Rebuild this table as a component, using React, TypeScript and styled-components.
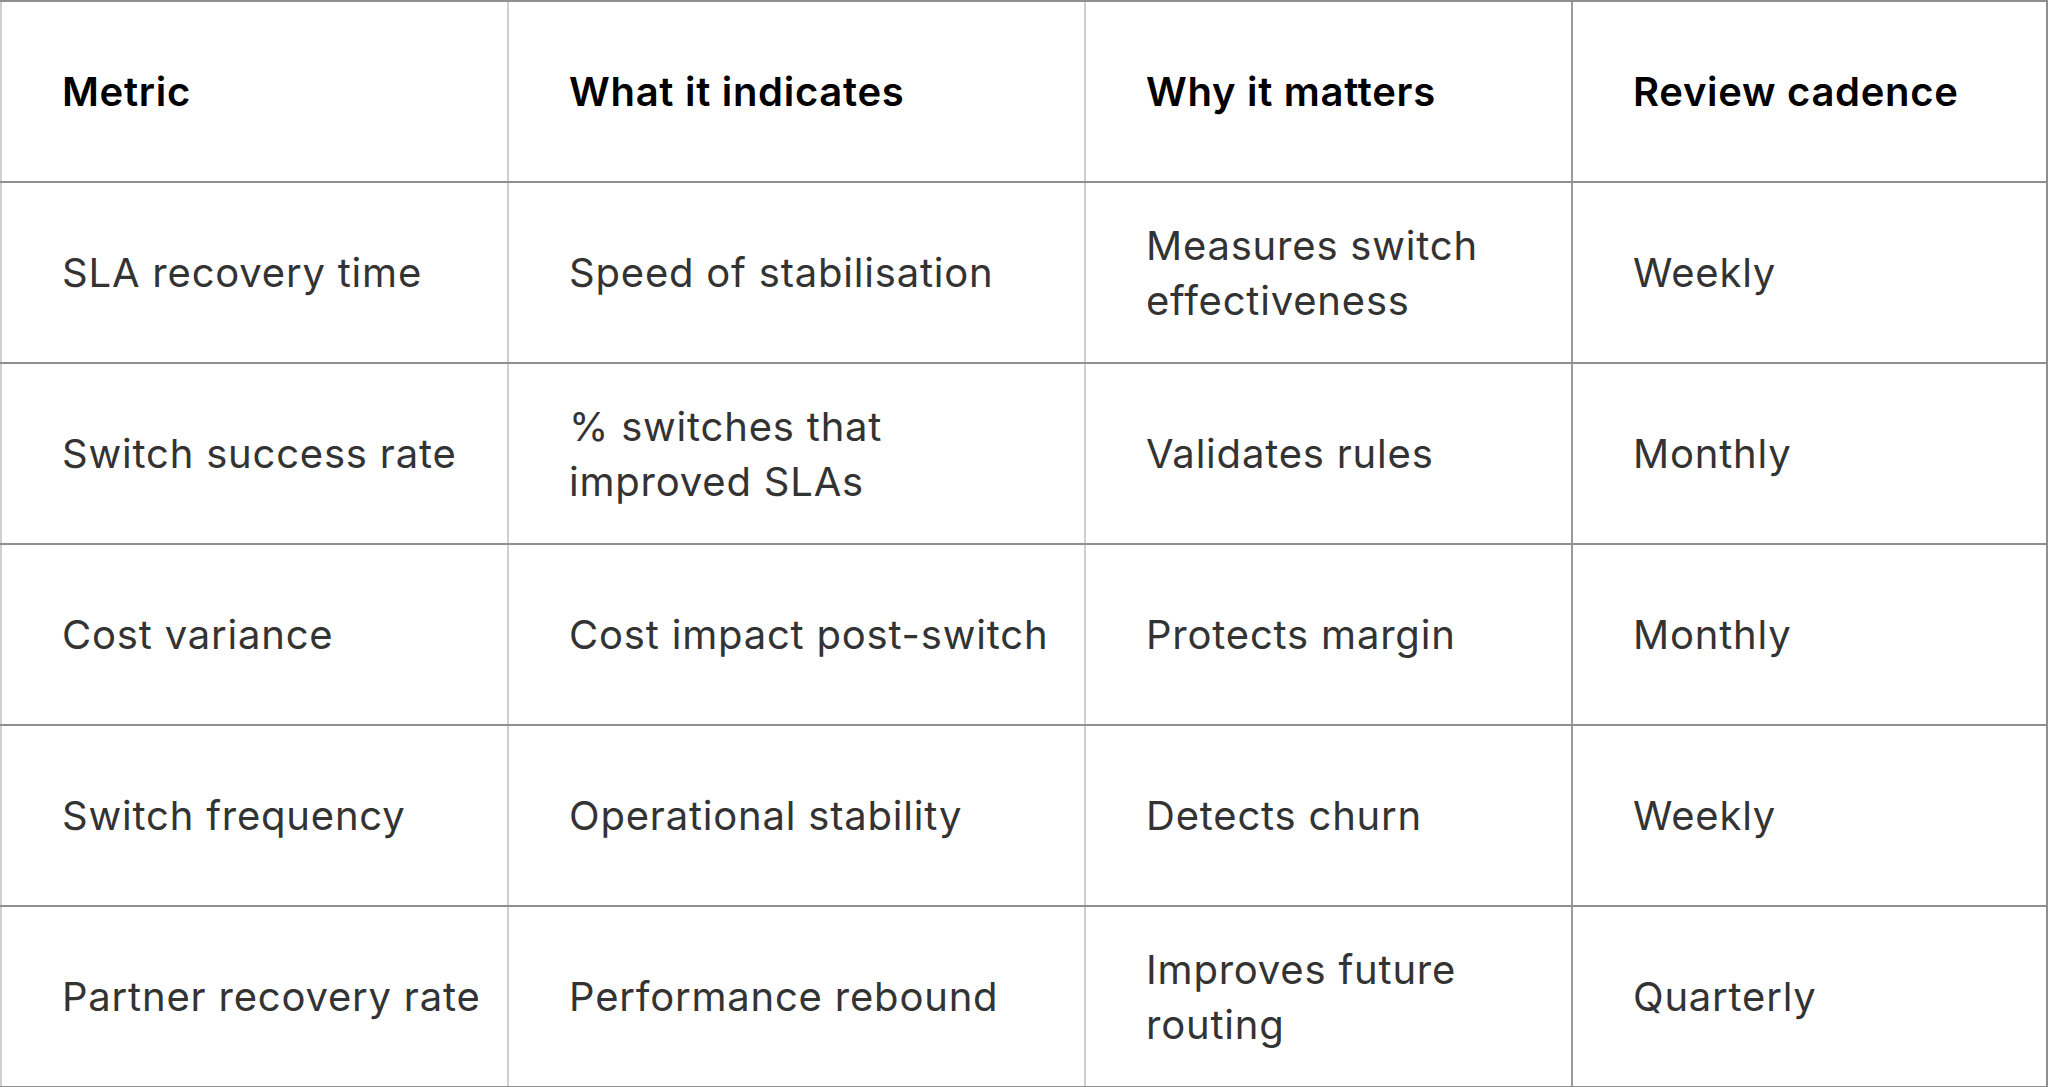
import React from "react";
import styled, { createGlobalStyle } from "styled-components";

const GlobalStyle = createGlobalStyle`
  html, body {
    margin: 0;
    padding: 0;
    background: #ffffff;
  }
  body {
    font-family: "Inter", "Liberation Sans", sans-serif;
  }
`;

const headers = ["Metric", "What it indicates", "Why it matters", "Review cadence"];
const widths = ["507px", "577px", "487px", "auto"];

const rows = [
  ["SLA recovery time", "Speed of stabilisation", "Measures switch effectiveness", "Weekly"],
  ["Switch success rate", "% switches that improved SLAs", "Validates rules", "Monthly"],
  ["Cost variance", "Cost impact post-switch", "Protects margin", "Monthly"],
  ["Switch frequency", "Operational stability", "Detects churn", "Weekly"],
  ["Partner recovery rate", "Performance rebound", "Improves future routing", "Quarterly"],
];

const App: React.FC = () => {
  return (
    <PageWrapper>
      <GlobalStyle />
      <MetricsTable>
        <colgroup>
          {widths.map((w, i) => (
            <Col key={i} $width={w} />
          ))}
        </colgroup>
        <thead>
          <tr>
            {headers.map((h) => (
              <HeadCell key={h}>{h}</HeadCell>
            ))}
          </tr>
        </thead>
        <tbody>
          {rows.map((r) => (
            <tr key={r[0]}>
              {r.map((c, i) => (
                <BodyCell key={i}>{c}</BodyCell>
              ))}
            </tr>
          ))}
        </tbody>
      </MetricsTable>
    </PageWrapper>
  );
};

export default App;

const PageWrapper = styled.div`
  width: 2048px;
  height: 1087px;
  overflow: hidden;
`;

const MetricsTable = styled.table`
  width: 2048px;
  table-layout: fixed;
  border-collapse: collapse;
  border: 2px solid #8f8f8f;
`;

const Col = styled.col<{ $width: string }>`
  width: ${(p) => p.$width};
`;

const cellBase = `
  height: 181px;
  box-sizing: border-box;
  padding: 0 30px 0 60px;
  vertical-align: middle;
  text-align: left;
  font-size: 40px;
  line-height: 55px;
  border-top: 2px solid #8f8f8f;
  border-bottom: 2px solid #8f8f8f;
  border-left: 2px solid #cfcfcf;
  &:first-child {
    padding-right: 0;
  }
  &:last-child {
    border-left-color: #9a9a9a;
  }
`;

const HeadCell = styled.th`
  ${cellBase}
  color: #000000;
  font-weight: 600;
  letter-spacing: 0.7px;
`;

const BodyCell = styled.td`
  ${cellBase}
  color: #333333;
  font-weight: 400;
  letter-spacing: 0.8px;
`;
